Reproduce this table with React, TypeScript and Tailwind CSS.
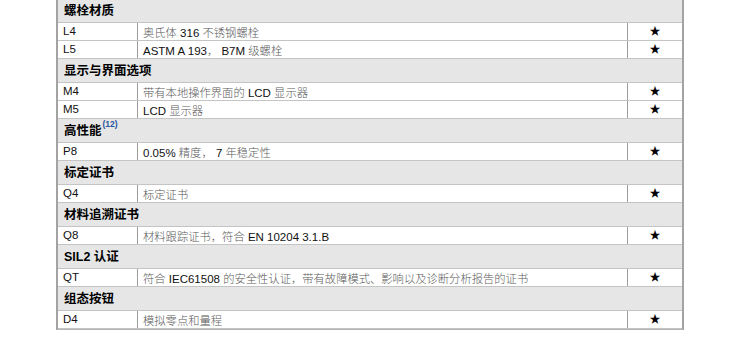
import React from 'react';

type Row = { code: string; desc: string };
type Section = { title: string; note?: string; rows: Row[] };

const sections: Section[] = [
  {
    title: '螺栓材质',
    rows: [
      { code: 'L4', desc: '奥氏体 316 不锈钢螺栓' },
      { code: 'L5', desc: 'ASTM A 193， B7M 级螺栓' },
    ],
  },
  {
    title: '显示与界面选项',
    rows: [
      { code: 'M4', desc: '带有本地操作界面的 LCD 显示器' },
      { code: 'M5', desc: 'LCD 显示器' },
    ],
  },
  {
    title: '高性能',
    note: '(12)',
    rows: [{ code: 'P8', desc: '0.05% 精度， 7 年稳定性' }],
  },
  {
    title: '标定证书',
    rows: [{ code: 'Q4', desc: '标定证书' }],
  },
  {
    title: '材料追溯证书',
    rows: [{ code: 'Q8', desc: '材料跟踪证书，符合 EN 10204 3.1.B' }],
  },
  {
    title: 'SIL2 认证',
    rows: [{ code: 'QT', desc: '符合 IEC61508 的安全性认证，带有故障模式、影响以及诊断分析报告的证书' }],
  },
  {
    title: '组态按钮',
    rows: [{ code: 'D4', desc: '模拟零点和量程' }],
  },
];

const CJK = /([\u3000-\u303f\u4e00-\u9fff\uff00-\uffef]+)/;

// Chinese runs are drawn lighter than the Latin text, like the printed datasheet
function Desc({ text }: { text: string }) {
  const parts = text.split(CJK).filter(Boolean);
  return (
    <span className="whitespace-pre leading-none">
      {parts.map((p, i) =>
        CJK.test(p) ? (
          <span key={i} className="text-[#5a5a5a] font-light text-[11.3px]">
            {p}
          </span>
        ) : (
          <span key={i} className="text-[#111] text-[11.5px]">
            {p}
          </span>
        )
      )}
    </span>
  );
}

export default function App() {
  return (
    <div
      className="w-[750px] h-[337px] bg-white overflow-hidden"
      style={{ fontFamily: '"Liberation Sans", Arial, "Noto Sans CJK SC", sans-serif' }}
    >
      <div className="ml-[56px] w-[628px] -mt-px border-x-2 border-x-[#a3a3a3] border-b border-b-[#b5b5b5]">
        {sections.map((s, si) => (
          <div key={si}>
            <div className="h-[24px] bg-[#e6e6e6] border-b border-[#c4c4c4] pl-[6px] flex items-center">
              <span className="text-[12.5px] font-bold text-black leading-none pt-[2px]">{s.title}</span>
              {s.note && (
                <sup className="text-[8.5px] font-bold text-[#2855a0] leading-none ml-px -mt-[4px]">{s.note}</sup>
              )}
            </div>
            {s.rows.map((r, ri) => (
              <div
                key={ri}
                className="h-[18px] bg-white border-b border-[#c4c4c4] grid grid-cols-[80px_1fr_54px] leading-none"
              >
                <div className="border-r border-[#9c9c9c] pl-[5px] flex items-center text-[11.5px] text-[#111] pt-px">
                  {r.code}
                </div>
                <div className="border-r border-[#9c9c9c] pl-[5px] flex items-center whitespace-nowrap">
                  <Desc text={r.desc} />
                </div>
                <div className="flex items-center justify-center text-[11px] text-black">★</div>
              </div>
            ))}
          </div>
        ))}
      </div>
    </div>
  );
}
